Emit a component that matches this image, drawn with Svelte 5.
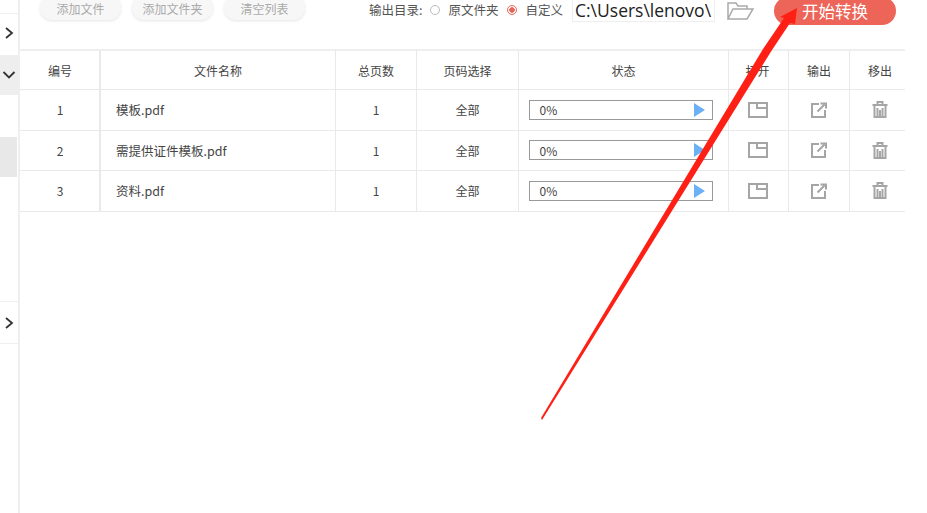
<script>
  const columns = ["编号", "文件名称", "总页数", "页码选择", "状态", "打开", "输出", "移出"];
  const files = [
    { id: 1, name: "模板.pdf" },
    { id: 2, name: "需提供证件模板.pdf" },
    { id: 3, name: "资料.pdf" },
  ];
</script>

<div class="page">
  <aside class="side">
    <div class="side-item first">
      <svg width="12" height="14" viewBox="0 0 12 14"><path d="M3 2l6 5-6 5" /></svg>
    </div>
    <div class="side-item open">
      <svg width="14" height="12" viewBox="0 0 14 12"><path d="M1.500 3l5.500 5.500L12.500 3" /></svg>
    </div>
    <div class="side-active"></div>
    <div class="side-item last">
      <svg width="12" height="14" viewBox="0 0 12 14"><path d="M3 2l6 5-6 5" /></svg>
    </div>
  </aside>

  <main class="main">
    <div class="toolbar">
      <div class="buttons">
        <button class="soft">添加文件</button>
        <button class="soft">添加文件夹</button>
        <button class="soft">清空列表</button>
      </div>
      <div class="output">
        <span class="label">输出目录:</span>
        <span class="radio"></span>
        <span class="opt">原文件夹</span>
        <span class="radio on"></span>
        <span class="opt">自定义</span>
        <div class="path">C:\Users\lenovo\</div>
        <svg class="folder" width="27" height="18" viewBox="0 0 27 18">
          <path d="M1 17V1h8l2 3h9v3M1 17h19l6-10H6z" />
        </svg>
        <button class="start">开始转换</button>
      </div>
    </div>

    <div class="table">
      <div class="row head">
        {#each columns as c}
          <div class="cell">{c}</div>
        {/each}
      </div>
      {#each files as f}
        <div class="row">
          <div class="cell">{f.id}</div>
          <div class="cell name">{f.name}</div>
          <div class="cell">1</div>
          <div class="cell">全部</div>
          <div class="cell">
            <div class="progress">
              <span>0%</span>
              <i class="play"></i>
            </div>
          </div>
          <div class="cell">
            <svg class="ico" width="20" height="16" viewBox="0 0 20 16">
              <path d="M1 1h18v14H1zM9 1v5h10" />
            </svg>
          </div>
          <div class="cell">
            <svg class="ico" width="16" height="16" viewBox="0 0 16 16">
              <path d="M8 2H1v13h13V8M6.500 9.500L13.500 2.500M9.500 1.500H15v5" />
            </svg>
          </div>
          <div class="cell">
            <svg class="ico" width="16" height="17" viewBox="0 0 16 17">
              <path d="M0.500 4h15M5.500 4V1h5v3M2.500 4v12h11V4" />
              <path d="M5.500 7v8M8 9v6M10.500 7v8" />
            </svg>
          </div>
        </div>
      {/each}
    </div>
  </main>

  <svg class="arrow" width="927" height="513" viewBox="0 0 927 513">
    <path d="M541 418 L763 49 L784 18 L780 17 L797 8 L795 24 L790 23 L772 50 L542 420 Z" />
  </svg>
</div>

<style>
  :global(body) {
    margin: 0;
    background: #fff;
  }

  .page {
    position: relative;
    display: flex;
    width: 927px;
    height: 513px;
    overflow: hidden;
    font-family: "Noto Sans CJK SC", "Liberation Sans", sans-serif;
    font-size: 12px;
    color: #444;
    background: #fff;
  }

  .side {
    width: 18px;
    border-right: 2px solid #efefef;
    flex-shrink: 0;
  }

  .side-item {
    display: flex;
    align-items: center;
    justify-content: center;
    height: 41px;
  }

  .side-item svg path {
    fill: none;
    stroke: #333;
    stroke-width: 1.800;
  }

  .first {
    box-sizing: border-box;
    height: 42px;
    margin-top: 13px;
    padding-bottom: 3px;
    border-top: 1px solid #efefef;
  }

  .open {
    height: 40px;
    background: #eee;
  }

  .side-active {
    height: 40px;
    margin: 42px 1px 0 0;
    background: #e8e8e8;
  }

  .last {
    margin-top: 124px;
    border-top: 1px solid #efefef;
    border-bottom: 1px solid #efefef;
  }

  .main {
    width: 885px;
    flex-shrink: 0;
  }

  .toolbar {
    display: flex;
    justify-content: space-between;
    height: 49px;
  }

  .buttons {
    display: flex;
    gap: 11px;
    margin: -4px 0 0 20px;
  }

  .soft {
    width: 81px;
    height: 24px;
    padding: 0;
    border: 0;
    border-radius: 12px;
    background: #f7f7f7;
    box-shadow: 0 1px 3px #e4e4e4;
    font: inherit;
    font-size: 12px;
    color: #aaa;
  }

  .output {
    display: flex;
    align-items: flex-start;
    margin-right: 9px;
    font-size: 12px;
    color: #555;
  }

  .label,
  .opt {
    margin-top: 1px;
    line-height: 17px;
  }

  .label {
    margin-right: 8px;
    font-size: 12.500px;
  }

  .radio {
    box-sizing: border-box;
    width: 10px;
    height: 10px;
    margin: 5px 8px 0 0;
    border: 1px solid #bbb;
    border-radius: 50%;
    background: #fff;
  }

  .radio.on {
    border-color: #e8655a;
    background: radial-gradient(circle, #e8655a 0 2.500px, #fff 3px);
  }

  .opt {
    margin-right: 9px;
    font-size: 12.500px;
  }

  .path {
    box-sizing: border-box;
    width: 143px;
    height: 22px;
    margin-right: 12px;
    padding-left: 2px;
    border: 1px solid #eee;
    border-top: 0;
    font-family: "Open Sans", "Liberation Sans", sans-serif;
    font-size: 17.500px;
    line-height: 20px;
    color: #222;
    white-space: nowrap;
  }

  .folder {
    margin: 2px 20px 0 0;
    fill: none;
    stroke: #aaa;
    stroke-width: 1.500;
  }

  .start {
    width: 122px;
    height: 28px;
    margin-top: -3px;
    padding: 0;
    border: 0;
    border-radius: 14px;
    background: #ec6558;
    color: #fff;
    font: inherit;
    font-size: 16.500px;
  }

  .table {
    border-top: 2px solid #eee;
    width: 885px;
  }

  .row {
    display: grid;
    grid-template-columns: 81px 235px 81px 102px 210px 60px 61px 55px;
    box-sizing: border-box;
    height: 40.500px;
    border-bottom: 1px solid #e9e9e9;
  }

  .head {
    height: 39px;
  }

  .cell {
    display: flex;
    align-items: center;
    justify-content: center;
    border-right: 1px solid #e9e9e9;
  }

  .cell:last-child {
    border-right: 0;
    padding-left: 5px;
  }

  .cell:first-child {
    padding-left: 1px;
    border-right-width: 2px;
  }

  .cell:nth-child(6) {
    padding-right: 2px;
  }

  .name {
    justify-content: flex-start;
    padding-left: 15px;
    font-size: 12.500px;
  }

  .progress {
    position: relative;
    display: flex;
    align-items: center;
    box-sizing: border-box;
    width: 184px;
    height: 20px;
    margin-right: 6px;
    padding-left: 10px;
    border: 1px solid #999;
  }

  .play {
    position: absolute;
    right: 7px;
    top: 2px;
    width: 0;
    height: 0;
    border-left: 11px solid #6cb0f5;
    border-top: 7px solid transparent;
    border-bottom: 7px solid transparent;
  }

  .ico {
    fill: none;
    stroke: #a5a5a5;
    stroke-width: 2;
  }

  .arrow {
    position: absolute;
    inset: 0;
    pointer-events: none;
  }

  .arrow path {
    fill: #ff2015;
  }
</style>
